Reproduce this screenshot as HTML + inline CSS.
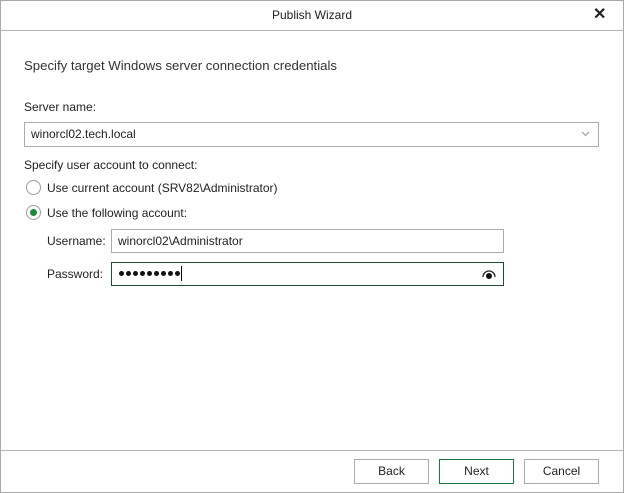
<!DOCTYPE html>
<html><head><style>
*{box-sizing:border-box;margin:0;padding:0}
body{width:624px;height:493px;background:#fff;font-family:"Liberation Sans",sans-serif;font-size:12px;color:#222;position:relative;overflow:hidden}
.win{position:absolute;left:0;top:0;width:624px;height:493px;border:1px solid #a9a9a9}
.a{position:absolute;white-space:nowrap}
.box{position:absolute;border:1px solid #acacac;background:#fff}
.btn{position:absolute;border:1px solid #acacac;background:#fff;text-align:center;line-height:23px;font-size:12px}
.radio{position:absolute;width:15px;height:15px;border:1px solid #999;border-radius:50%;background:#fff}
.d{position:absolute;top:271px;width:5px;height:5px;border-radius:50%;background:#111}
</style></head><body>
<div class="win"></div>
<div class="a" style="left:0;top:0;width:624px;text-align:center;top:8px;font-size:12px">Publish Wizard</div>
<div class="a" style="left:593px;top:4px;font-size:16px;font-weight:bold">✕</div>
<div style="position:absolute;left:1px;top:30px;width:622px;height:1px;background:#b5b5b5"></div>
<div class="a" style="left:24px;top:58px;font-size:13.2px;color:#333">Specify target Windows server connection credentials</div>
<div class="a" style="left:24px;top:100px">Server name:</div>
<div class="box" style="left:24px;top:122px;width:575px;height:25px"></div>
<div class="a" style="left:31px;top:127px">winorcl02.tech.local</div>
<svg style="position:absolute;left:581px;top:131px" width="9" height="6"><path d="M1 1L4.5 4.5L8 1" stroke="#aaa" fill="none" stroke-width="1.3"/></svg>
<div class="a" style="left:24px;top:158px">Specify user account to connect:</div>
<div class="radio" style="left:26px;top:180px"></div>
<div class="a" style="left:47px;top:181px">Use current account (SRV82\Administrator)</div>
<div class="radio" style="left:26px;top:205px"><div style="position:absolute;left:3px;top:3px;width:7px;height:7px;border-radius:50%;background:#1a8a3a"></div></div>
<div class="a" style="left:47px;top:206px">Use the following account:</div>
<div class="a" style="left:47px;top:234px">Username:</div>
<div class="box" style="left:111px;top:229px;width:393px;height:24px"></div>
<div class="a" style="left:118px;top:234px">winorcl02\Administrator</div>
<div class="a" style="left:47px;top:267px">Password:</div>
<div class="box" style="left:111px;top:262px;width:393px;height:24px;border-color:#1d4d2d"></div>
<div class="d" style="left:119px"></div><div class="d" style="left:126px"></div><div class="d" style="left:133px"></div><div class="d" style="left:140px"></div><div class="d" style="left:147px"></div><div class="d" style="left:154px"></div><div class="d" style="left:161px"></div><div class="d" style="left:168px"></div><div class="d" style="left:175px"></div>
<div style="position:absolute;left:181px;top:266px;width:1px;height:15px;background:#000"></div>
<svg style="position:absolute;left:481px;top:266px" width="16" height="14"><path d="M2 11A6 6 0 0 1 14 11" stroke="#222" fill="none" stroke-width="1.3"/><circle cx="8" cy="10" r="3" fill="#111"/></svg>
<div style="position:absolute;left:1px;top:450px;width:622px;height:1px;background:#b5b5b5"></div>
<div class="btn" style="left:354px;top:459px;width:75px;height:25px">Back</div>
<div class="btn" style="left:439px;top:459px;width:75px;height:25px;border-color:#1d7a3e">Next</div>
<div class="btn" style="left:524px;top:459px;width:75px;height:25px">Cancel</div>
</body></html>
